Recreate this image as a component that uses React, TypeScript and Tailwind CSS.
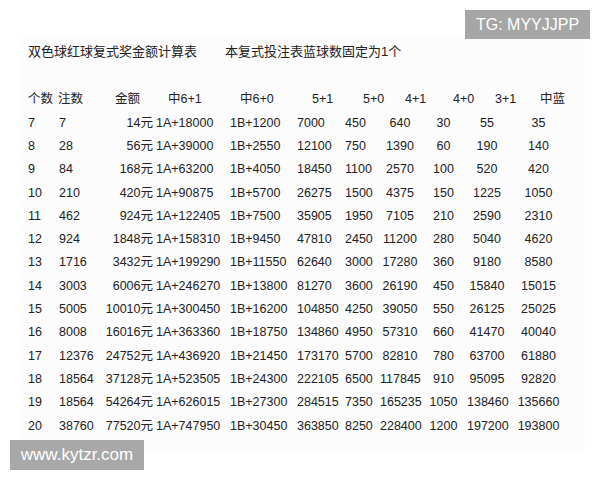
const rows: string[][] = [
  ["7", "7", "14元", "1A+18000", "1B+1200", "7000", "450", "640", "30", "55", "35"],
  ["8", "28", "56元", "1A+39000", "1B+2550", "12100", "750", "1390", "60", "190", "140"],
  ["9", "84", "168元", "1A+63200", "1B+4050", "18450", "1100", "2570", "100", "520", "420"],
  ["10", "210", "420元", "1A+90875", "1B+5700", "26275", "1500", "4375", "150", "1225", "1050"],
  ["11", "462", "924元", "1A+122405", "1B+7500", "35905", "1950", "7105", "210", "2590", "2310"],
  ["12", "924", "1848元", "1A+158310", "1B+9450", "47810", "2450", "11200", "280", "5040", "4620"],
  ["13", "1716", "3432元", "1A+199290", "1B+11550", "62640", "3000", "17280", "360", "9180", "8580"],
  ["14", "3003", "6006元", "1A+246270", "1B+13800", "81270", "3600", "26190", "450", "15840", "15015"],
  ["15", "5005", "10010元", "1A+300450", "1B+16200", "104850", "4250", "39050", "550", "26125", "25025"],
  ["16", "8008", "16016元", "1A+363360", "1B+18750", "134860", "4950", "57310", "660", "41470", "40040"],
  ["17", "12376", "24752元", "1A+436920", "1B+21450", "173170", "5700", "82810", "780", "63700", "61880"],
  ["18", "18564", "37128元", "1A+523505", "1B+24300", "222105", "6500", "117845", "910", "95095", "92820"],
  ["19", "18564", "54264元", "1A+626015", "1B+27300", "284515", "7350", "165235", "1050", "138460", "135660"],
  ["20", "38760", "77520元", "1A+747950", "1B+30450", "363850", "8250", "228400", "1200", "197200", "193800"],
];

// column widths + alignment for the value cells, and left padding for the header labels
const cols = [
  { label: "个数", cell: "w-[30px] text-left", head: "w-[30px] pl-0" },
  { label: "注数", cell: "w-[42px] text-left pl-[1px]", head: "w-[42px] pl-0" },
  { label: "金额", cell: "w-[53px] text-right", head: "w-[53px] pl-[15px]" },
  { label: "中6+1", cell: "w-[77px] text-left pl-[3px]", head: "w-[77px] pl-[15px]" },
  { label: "中6+0", cell: "w-[67px] text-left", head: "w-[67px] pl-[10px]" },
  { label: "5+1", cell: "w-[48px] text-left", head: "w-[48px] pl-[15px]" },
  { label: "5+0", cell: "w-[35px] text-left", head: "w-[35px] pl-[18px]" },
  { label: "4+1", cell: "w-[40px] text-center", head: "w-[40px] pl-[25px]" },
  { label: "4+0", cell: "w-[47px] text-center", head: "w-[47px] pl-[33px]" },
  { label: "3+1", cell: "w-[40px] text-center", head: "w-[40px] pl-[28px]" },
  { label: "中蓝", cell: "w-[63px] text-center", head: "w-[63px] pl-[33px]" },
];

const font = {
  fontFamily: '"Liberation Sans", "Noto Sans CJK SC", sans-serif',
};

export default function App() {
  return (
    <div className="relative h-[480px] w-[600px] overflow-hidden bg-white pl-[20px] pt-[38px]" style={font}>
      <div className="w-[565px] bg-[#fcfcfc] pb-[12px] pl-[8px] pt-[4px] text-[12.5px] text-[#222]">
        <div className="flex h-[20px] items-center text-[13px] leading-[20px]">
          <span className="w-[197px] whitespace-nowrap">双色球红球复式奖金额计算表</span>
          <span className="whitespace-nowrap">本复式投注表蓝球数固定为1个</span>
        </div>

        <div className="mt-[26.35px]">
          <div className="flex h-[23.3px] items-center leading-[23.3px]">
            {cols.map((c) => (
              <div key={c.label} className={`${c.head} shrink-0 whitespace-nowrap text-left`}>
                {c.label}
              </div>
            ))}
          </div>
          {rows.map((r) => (
            <div key={r[0]} className="flex h-[23.3px] items-center leading-[23.3px]">
              {r.map((v, i) => (
                <div key={i} className={`${cols[i].cell} shrink-0 whitespace-nowrap`}>
                  {v}
                </div>
              ))}
            </div>
          ))}
        </div>
      </div>

      {/* watermarks */}
      <div className="absolute left-[465px] top-[10px] flex h-[29px] w-[125px] items-center justify-center bg-[#a6a6a6] text-[16px] text-white">
        TG: MYYJJPP
      </div>
      <div className="absolute left-[10px] top-[440px] flex h-[30px] w-[134px] items-center justify-center bg-[#a8a8a8] text-[17px] text-white">
        www.kytzr.com
      </div>
    </div>
  );
}
